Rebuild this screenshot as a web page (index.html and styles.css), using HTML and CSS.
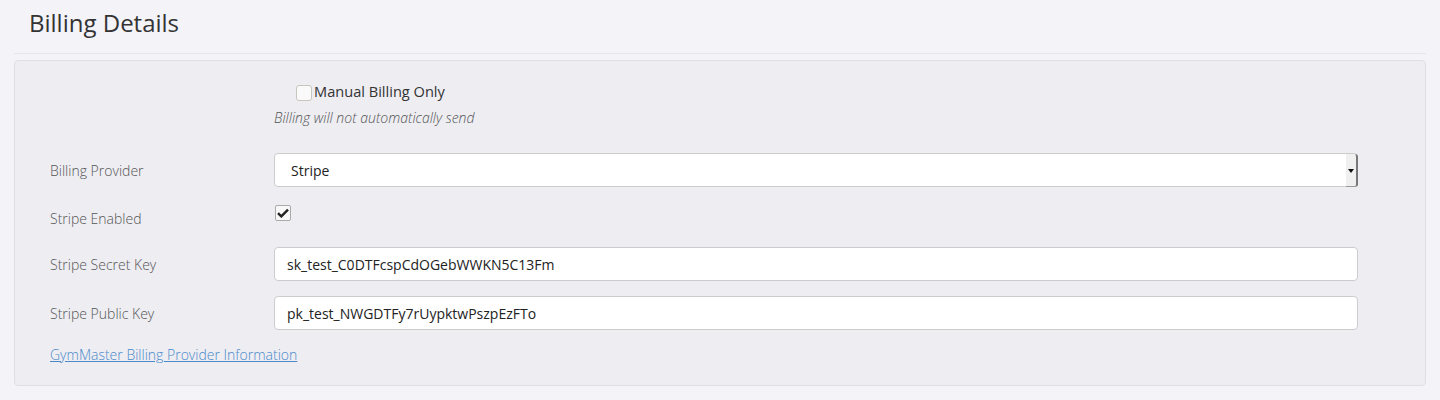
FILE: index.html
```html
<!DOCTYPE html>
<html>
<head>
    <title>Billing Details</title>
    <link rel="stylesheet" href="styles.css">
</head>
<body>
    <div class="page-header">
        <h1>Billing Details</h1>
    </div>

    <div class="panel">
        <div class="form-row offset">
            <label class="check-label"><input type="checkbox" class="plain-check"> Manual Billing Only</label>
            <p class="help-text">Billing will not automatically send</p>
        </div>

        <div class="form-row">
            <label class="row-label">Billing Provider</label>
            <div class="control select-wrap">
                <select class="field">
                    <option>Stripe</option>
                </select>
                <span class="select-arrow"></span>
            </div>
        </div>

        <div class="form-row short">
            <label class="row-label">Stripe Enabled</label>
            <div class="control">
                <span class="tick-box">
                    <svg width="12" height="10" viewBox="0 0 12 10"><path d="M1 5.2 L4.3 8.4 L11 1.6" fill="none" stroke="#222" stroke-width="2.4"/></svg>
                </span>
            </div>
        </div>

        <div class="form-row">
            <label class="row-label">Stripe Secret Key</label>
            <div class="control">
                <input type="text" class="field" value="sk_test_C0DTFcspCdOGebWWKN5C13Fm">
            </div>
        </div>

        <div class="form-row">
            <label class="row-label">Stripe Public Key</label>
            <div class="control">
                <input type="text" class="field" value="pk_test_NWGDTFy7rUypktwPszpEzFTo">
            </div>
        </div>

        <a href="#" class="info-link">GymMaster Billing Provider Information</a>
    </div>
</body>
</html>
```

FILE: styles.css
```css
body {
    font-family: 'Open Sans', sans-serif;
    background-color: #f3f3f8;
    margin: 0;
    color: #333;
    font-size: 14px;
}

.page-header {
    margin: 0 14px;
    padding: 7px 15px 0;
    height: 46px;
    border-bottom: 1px solid #e6e6ec;
}

h1 {
    margin: 0;
    font-size: 24px;
    font-weight: 400;
    color: #333;
    line-height: 32px;
}

.panel {
    margin: 6px 14px 0;
    height: 304px;
    padding: 20px 35px 0;
    background: #ededf2;
    border: 1px solid #dfdfe5;
    border-radius: 4px;
}

.form-row {
    display: flex;
    align-items: center;
    height: 34px;
    margin-bottom: 15px;
}

.form-row.short {
    height: 30px;
    margin-bottom: 15px;
    align-items: flex-start;
}

.form-row.short .row-label {
    line-height: 34px;
}

.form-row.offset {
    display: block;
    height: auto;
    padding-left: 224px;
    margin-bottom: 25px;
}

.row-label {
    width: 224px;
    flex-shrink: 0;
    color: #555;
    font-weight: 300;
}

.control {
    width: 1084px;
}

.check-label {
    display: flex;
    align-items: center;
    line-height: 20px;
    padding-left: 22px;
    color: #333;
    font-size: 14.6px;
}

.plain-check {
    width: 16px;
    height: 16px;
    margin: 4px 2px 0 0;
    appearance: none;
    background: #fafafa;
    border: 1px solid #c9c5c0;
    border-radius: 3px;
}

.help-text {
    margin: 7px 0 0;
    font-style: italic;
    font-weight: 300;
    color: #555;
    line-height: 20px;
}

.field {
    display: block;
    width: 100%;
    height: 34px;
    box-sizing: border-box;
    padding: 0 12px;
    border: 1px solid #ccc;
    border-radius: 4px;
    background: #fff;
    font-family: 'Open Sans', sans-serif;
    font-size: 14px;
    color: #222;
}

select.field {
    appearance: none;
    padding-left: 16px;
}

.select-wrap {
    position: relative;
}

.select-arrow {
    position: absolute;
    right: 0;
    top: 1px;
    width: 10px;
    height: 32px;
    background: #f0f0f0;
    border-right: 2px solid #777;
    border-bottom: 1px solid #999;
    border-radius: 0 3px 3px 0;
}

.select-arrow::after {
    content: "";
    position: absolute;
    left: 2px;
    top: 15px;
    border-left: 3px solid transparent;
    border-right: 3px solid transparent;
    border-top: 4px solid #111;
}

.tick-box {
    display: flex;
    align-items: center;
    justify-content: center;
    width: 14px;
    height: 14px;
    margin: 3px 0 0 1px;
    border: 1px solid #aaa;
    border-radius: 2px;
    background: #f8f8f8;
}

.info-link {
    color: #4a8acb;
    text-decoration: underline;
    font-weight: 300;
}
```
